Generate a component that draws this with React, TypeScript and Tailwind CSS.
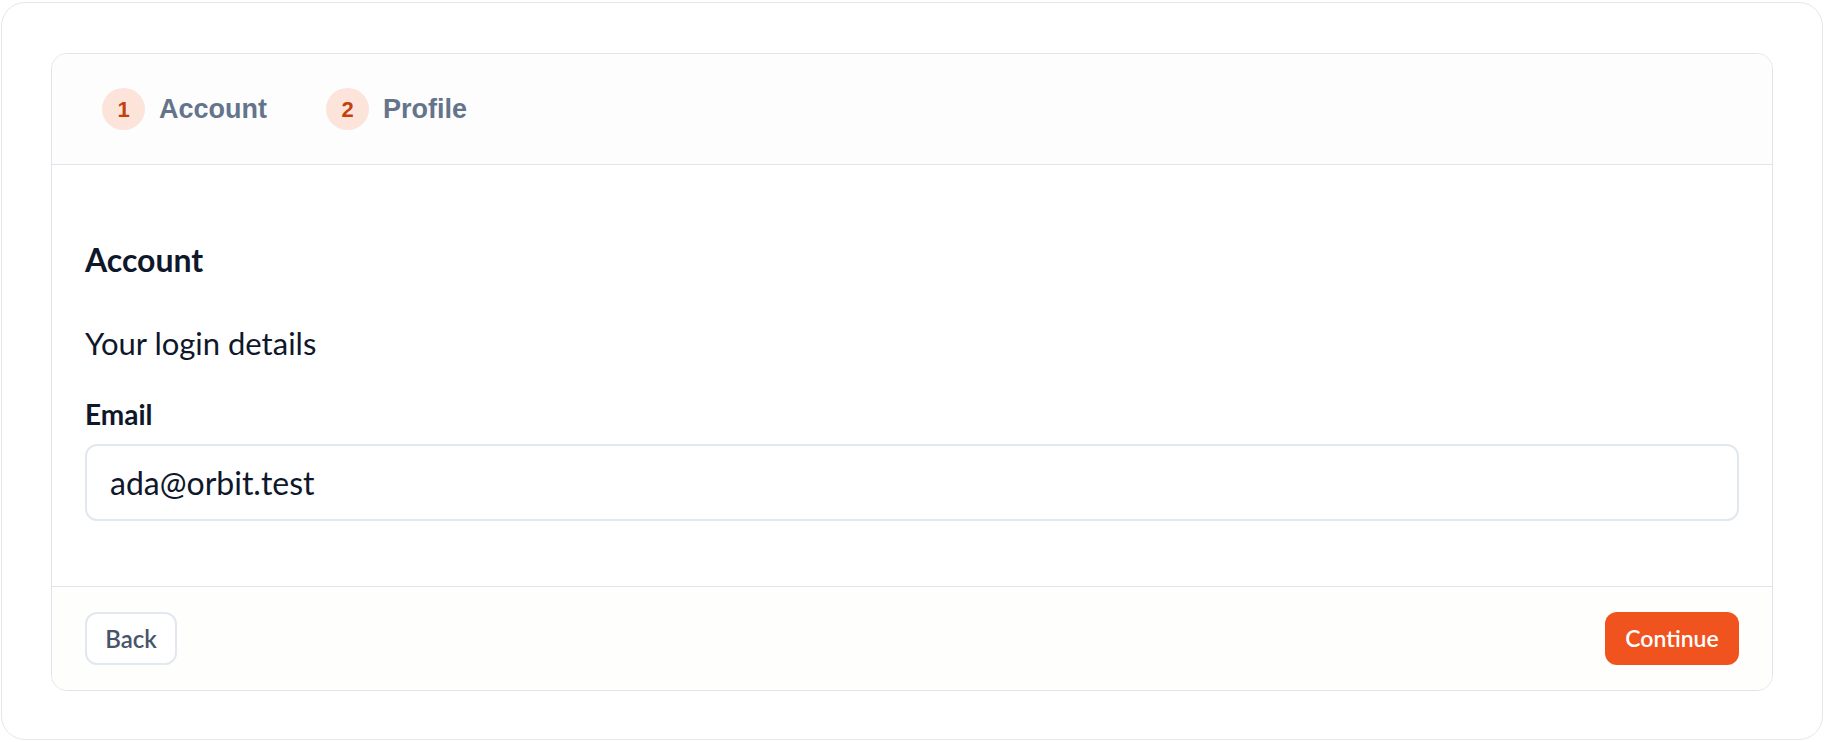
import { useState } from 'react';

const steps = [
  { n: 1, label: 'Account' },
  { n: 2, label: 'Profile' },
];

function StepTab({ n, label }: { n: number; label: string }) {
  return (
    <div className="flex items-center gap-[14px]">
      <span className="flex h-[42px] w-[43px] items-center justify-center rounded-full bg-[#fde4db] text-[22px] font-bold text-[#c2410c]">
        {n}
      </span>
      <span className="text-[27px] font-bold text-[#64748b]">{label}</span>
    </div>
  );
}

export default function App() {
  const [email, setEmail] = useState('ada@orbit.test');

  return (
    <div className="bg-white px-px pt-[2px]" style={{ fontFamily: 'Lato, sans-serif' }}>
      <div className="h-[738px] rounded-[24px] border border-[#e5e7eb] bg-white px-[49px] pt-[50px]">
        <div className="flex flex-col overflow-hidden rounded-2xl border border-[#e2e4ea]">
          {/* steps */}
          <div
            className="flex h-[111px] items-center gap-[59px] border-b border-[#e2e4ea] bg-[#fdfdfd] pl-[50px]"
            style={{ fontFamily: '"Liberation Sans", Arial, sans-serif' }}
          >
            {steps.map((s) => (
              <StepTab key={s.n} n={s.n} label={s.label} />
            ))}
          </div>

          {/* body */}
          <div className="flex flex-col bg-white px-[33px] pt-[79px] pb-[65px] text-[#0f172a]">
            <h2 className="text-[32px] leading-[32px] font-bold">Account</h2>
            <p className="mt-[51px] text-[31px] leading-[32px]">Your login details</p>
            <label className="mt-[41px] text-[28px] leading-[28px] font-bold" htmlFor="email">
              Email
            </label>
            <input
              id="email"
              value={email}
              onChange={(e) => setEmail(e.target.value)}
              className="mt-[16px] h-[77px] rounded-xl border-2 border-[#e2e8f0] bg-white px-[23px] text-[32px] text-[#0f172a] outline-none"
            />
          </div>

          {/* footer */}
          <div className="flex items-center justify-between border-t border-[#e2e4ea] bg-[#fefefc] px-[33px] py-[25px]">
            <button className="h-[53px] w-[92px] rounded-xl border-2 border-[#e2e8f0] bg-white text-[24px] font-semibold text-[#475569]">
              Back
            </button>
            <button className="h-[53px] w-[134px] rounded-xl bg-[#f1531f] text-[23px] font-semibold text-white">
              Continue
            </button>
          </div>
        </div>
      </div>
    </div>
  );
}
